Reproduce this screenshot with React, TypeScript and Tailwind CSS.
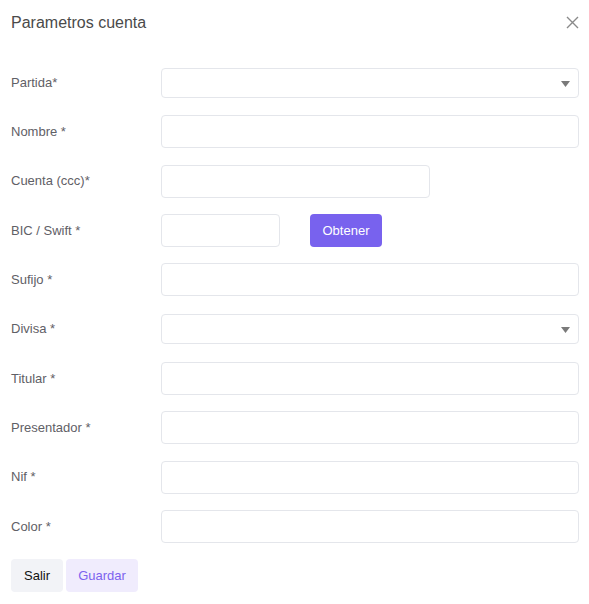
import React from 'react';

type Field = {
  label: string;
  kind: 'select' | 'input' | 'half' | 'bic';
};

const fields: Field[] = [
  { label: 'Partida*', kind: 'select' },
  { label: 'Nombre *', kind: 'input' },
  { label: 'Cuenta (ccc)*', kind: 'half' },
  { label: 'BIC / Swift *', kind: 'bic' },
  { label: 'Sufijo *', kind: 'input' },
  { label: 'Divisa *', kind: 'select' },
  { label: 'Titular *', kind: 'input' },
  { label: 'Presentador *', kind: 'input' },
  { label: 'Nif *', kind: 'input' },
  { label: 'Color *', kind: 'input' },
];

const inputCls =
  'h-[33px] rounded-[4px] border border-[#e4e6eb] bg-white px-3 text-[13px] text-[#333] outline-none';

const Control: React.FC<{ kind: Field['kind'] }> = ({ kind }) => {
  if (kind === 'select') {
    return (
      <div className="relative flex h-[30px] w-[418px] items-center rounded-[4px] border border-[#e4e6eb] bg-white">
        <svg className="absolute right-[8px] top-[12px]" width="9" height="6" viewBox="0 0 9 6">
          <path d="M0 0h9L4.5 6z" fill="#7a7a7a" />
        </svg>
      </div>
    );
  }
  if (kind === 'half') return <input className={`${inputCls} w-[269px]`} />;
  if (kind === 'bic') {
    return (
      <div className="flex items-center gap-[30px]">
        <input className={`${inputCls} w-[119px]`} />
        <button className="h-[33px] w-[72px] rounded-[4px] bg-[#7862ee] text-[13px] text-white">
          Obtener
        </button>
      </div>
    );
  }
  return <input className={`${inputCls} w-[418px]`} />;
};

export default function App() {
  return (
    <div className="h-[604px] w-[589px] bg-white font-['Liberation_Sans',Arial,sans-serif]">
      <div className="flex h-[45px] items-center justify-between pl-[11px] pr-[10px]">
        <h2 className="text-[16px] text-[#4a4a4a]">Parametros cuenta</h2>
        <svg width="13" height="13" viewBox="0 0 13 13" stroke="#8a8a8a" strokeWidth="1.4">
          <path d="M1 1l11 11M12 1L1 12" />
        </svg>
      </div>
      <div className="mt-[13px] flex flex-col">
        {fields.map((f) => (
          <div key={f.label} className="flex h-[49.3px] items-center">
            <label className="w-[161px] pl-[11px] text-[13px] text-[#5f6066]">{f.label}</label>
            <Control kind={f.kind} />
          </div>
        ))}
      </div>
      <div className="mt-[8px] flex gap-[3px] pl-[11px]">
        <button className="h-[33px] w-[52px] rounded-[4px] bg-[#f2f3f7] text-[13px] text-[#111]">Salir</button>
        <button className="h-[33px] w-[72px] rounded-[4px] bg-[#f0ecfd] text-[13px] text-[#7d63ef]">
          Guardar
        </button>
      </div>
    </div>
  );
}
